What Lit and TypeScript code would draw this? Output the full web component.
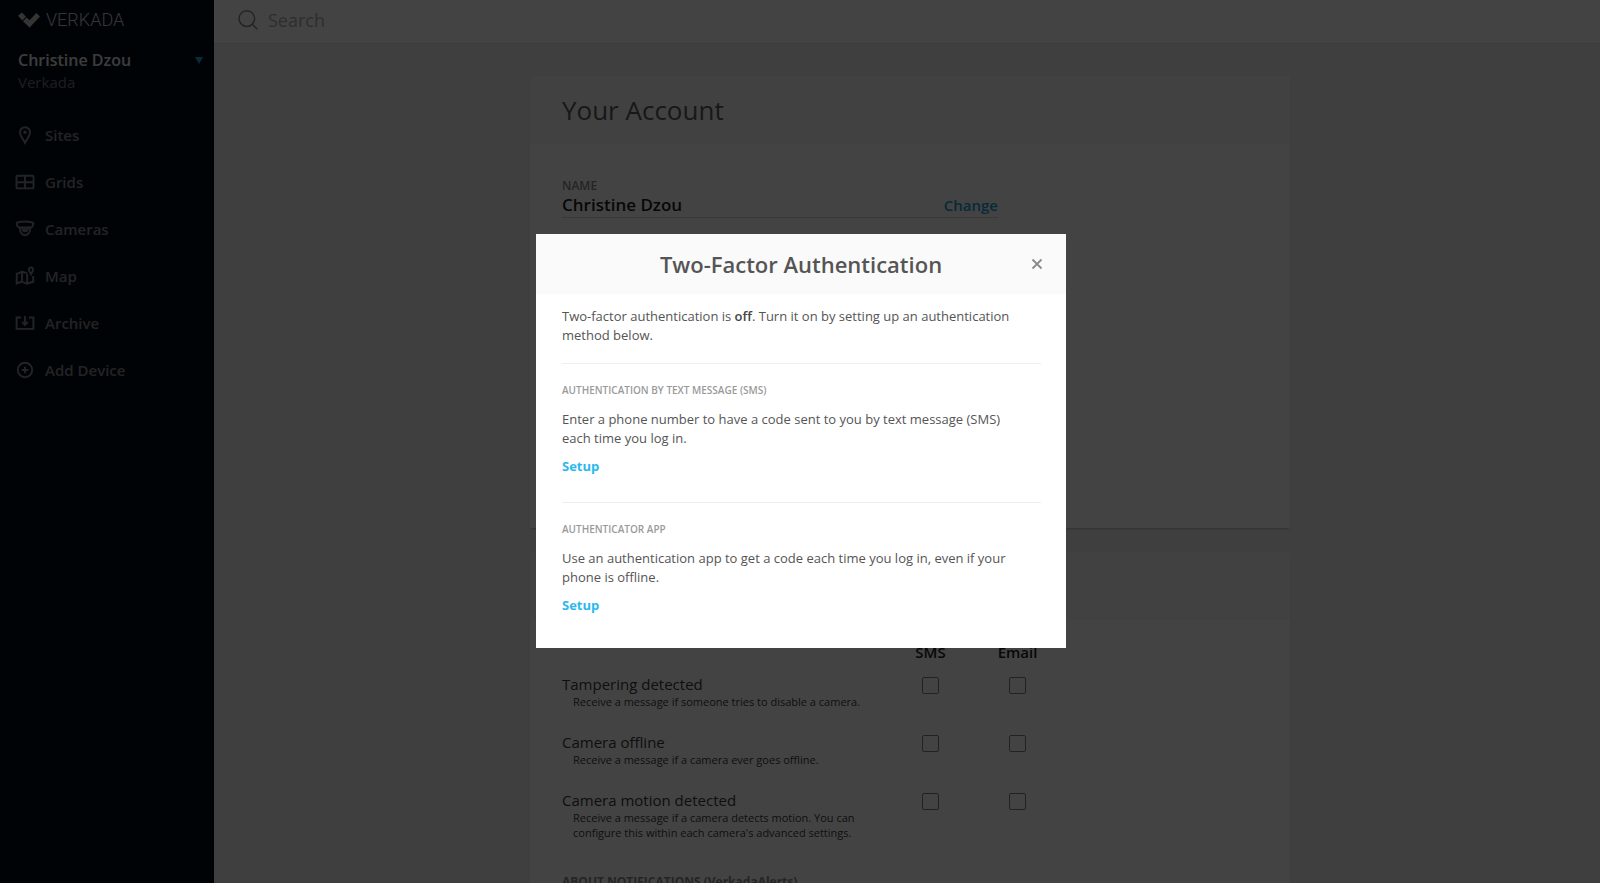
import { LitElement, html, css, svg } from "lit";
import { customElement } from "lit/decorators.js";

const icons: Record<string, unknown> = {
  sites: svg`<path d="M10 2.200a5 5 0 0 0-5 5.200c0 3.200 3 6.200 5 10.400 2-4.200 5-7.200 5-10.400a5 5 0 0 0-5-5.200z"/><circle cx="10" cy="7.300" r=".8" fill="currentColor"/>`,
  grids: svg`<rect x="1.500" y="3.800" width="17" height="12.600" rx="1"/><path d="M10 4v12.400M1.500 10.200h17"/>`,
  cameras: svg`<path d="M2.500 3.500c4-1 11-1 15 0 1 .3 1 1 .7 2-.4 1.500-1 2.500-2 3H3.800c-1-.5-1.600-1.500-2-3-.3-1-.3-1.700.7-2z"/><path d="M4.800 8.800c.2 5 2.200 7.400 5.200 7.400s5-2.400 5.200-7.400"/><path d="M7.300 8.800c0 4.600 5.400 4.600 5.400 0"/><circle cx="10" cy="10.500" r=".5"/>`,
  map: svg`<path d="M12.200 7.200 7 5.800 1.700 7.800v9.700l4.800-1.800 5.700 2 6-2V10M7 5.800v9.700M12.200 8v9.500"/><path d="M16 1.500a2.200 2.200 0 0 0-2.200 2.300c0 1.400 1.400 2.600 2.200 4.400.8-1.800 2.200-3 2.200-4.400A2.200 2.200 0 0 0 16 1.500z"/>`,
  archive: svg`<path d="M6 4.500H1.600v11.400h16.800V4.500H14M10 3v8.500M7.200 9l2.800 2.800L12.800 9"/>`,
  add: svg`<circle cx="10" cy="10" r="7.200"/><path d="M10 6.800v6.400M6.800 10h6.400"/>`,
};

const nav = [
  ["sites", "Sites"],
  ["grids", "Grids"],
  ["cameras", "Cameras"],
  ["map", "Map"],
  ["archive", "Archive"],
  ["add", "Add Device"],
];

const alerts = [
  ["tamper", "Tampering detected", "Receive a message if someone tries to disable a camera."],
  ["offline", "Camera offline", "Receive a message if a camera ever goes offline."],
  ["motion", "Camera motion detected", "Receive a message if a camera detects motion. You can configure this within each camera's advanced settings."],
];

@customElement("side-nav")
class SideNav extends LitElement {
  static styles = css`
    :host { display: block; background: #000f18; color: #85878a; padding: 11px 11px 0 18px; box-sizing: border-box; }
    .brand { display: flex; align-items: center; gap: 6px; height: 18px; color: #c8c8c8; font: 300 18px/18px Roboto, sans-serif; }
    .brand svg { width: 22px; height: 16px; fill: currentColor; }
    .user { display: flex; align-items: center; justify-content: space-between; width: 100%; margin-top: 20px; padding: 0; border: 0; background: none; color: #e4e4e4; font: 600 16px/22px "Open Sans", sans-serif; }
    .caret { width: 0; border: 4px solid transparent; border-top: 7px solid #1ca4e6; border-bottom: 0; }
    .org { font-size: 15px; line-height: 22px; color: #6f7174; }
    ul { list-style: none; margin: 18px 0 0; padding: 0; }
    a { display: flex; align-items: center; gap: 10px; height: 47px; margin-left: -3px; color: inherit; text-decoration: none; font-weight: 600; font-size: 15px; }
    a svg { width: 20px; height: 20px; fill: none; stroke: currentColor; stroke-width: 1.900; }
  `;
  render() {
    return html`
      <div class="brand">
        <svg viewBox="0 0 22 16" aria-hidden="true"><path d="M0 3.800 3.800.600 8 4.800 4.300 8.600zM5 9.300 8.700 5.600 11.500 8.300 18.300.900 22 4.500 11.600 15.600z"/></svg>
        <span>VERKADA</span>
      </div>
      <button class="user">Christine Dzou<span class="caret"></span></button>
      <div class="org">Verkada</div>
      <nav><ul>${nav.map(([id, label]) => html`<li><a href="#${id}"><svg viewBox="0 0 20 20" aria-hidden="true">${icons[id]}</svg>${label}</a></li>`)}</ul></nav>
    `;
  }
}

@customElement("account-page")
class AccountPage extends LitElement {
  static styles = css`
    :host { display: block; background: #f0f0f0; min-width: 0; }
    .top { display: flex; align-items: center; gap: 10px; height: 44px; padding: 0 24px 4px; background: #fff; border-bottom: 1px solid #e0e0e0; box-sizing: border-box; }
    .top svg { width: 20px; height: 20px; fill: none; stroke: #8a8a8a; stroke-width: 1.500; }
    .top input { flex: 1; border: 0; outline: 0; padding: 0; background: none; font: 18px/26px "Open Sans", sans-serif; }
    .top input::placeholder { color: #b0b0b0; opacity: 1; }
    .cards { display: grid; gap: 24px; width: 760px; max-width: 100%; margin: 0 auto; padding: 32px 0 0 6px; }
    .card { background: #fff; box-shadow: 0 2px 2px -1px #bbb; }
    .card h2 { margin: 0; padding: 16px 32px; background: #f8f8f8; color: #5c5c5c; font-weight: 400; font-size: 26px; line-height: 36px; }
    .fields { padding: 34px 32px 0; min-height: 350px; }
    .name { display: grid; grid-template-columns: 1fr auto; width: 436px; border-bottom: 1px solid #d4d4d4; padding-bottom: 1px; }
    .name label { grid-column: 1 / -1; color: #8b8b8b; font-size: 12px; font-weight: 600; line-height: 16px; }
    .name output { color: #1c1c1c; font-size: 17px; font-weight: 600; line-height: 22px; }
    .name a { color: #19a0dc; font-size: 15px; font-weight: 600; line-height: 22px; text-decoration: none; }
    .alerts { padding: 20px 32px; }
    table { border-collapse: collapse; table-layout: fixed; width: 499px; }
    th, td { padding: 0; vertical-align: top; text-align: left; font-weight: 400; }
    th.col { width: 87px; text-align: center; font-weight: 600; font-size: 15px; line-height: 24px; color: #1c1c1c; height: 34px; }
    td { text-align: center; }
    .row { height: 58px; }
    .label { font-size: 15px; line-height: 20px; color: #3a3a3a; }
    .hint { max-width: 300px; padding-left: 11px; font-size: 11px; line-height: 15px; color: #404040; }
    input[type="checkbox"] { appearance: none; box-sizing: border-box; width: 17px; height: 17px; margin: 3px 0 0; border: 1px solid #808080; border-radius: 2px; }
    h3 { margin: 26px 0 0; color: #8b8b8b; font-size: 12px; line-height: 16px; font-weight: 700; }
  `;
  render() {
    return html`
      <header class="top">
        <svg viewBox="0 0 20 20" aria-hidden="true"><circle cx="8.800" cy="8.600" r="7.800"/><path d="m14.300 14.200 5 5"/></svg>
        <input type="search" placeholder="Search" aria-label="Search">
      </header>
      <main class="cards">
        <section class="card">
          <h2>Your Account</h2>
          <div class="fields">
            <div class="name"><label for="name">NAME</label><output id="name">Christine Dzou</output><a href="#change">Change</a></div>
          </div>
        </section>
        <section class="card">
          <h2>Notifications</h2>
          <div class="alerts">
            <table>
              <thead><tr><th></th><th class="col" scope="col">SMS</th><th class="col" scope="col">Email</th></tr></thead>
              <tbody>${alerts.map(([id, label, hint]) => html`
                <tr class="row"><th scope="row"><div class="label">${label}</div><div class="hint">${hint}</div></th>
                <td><input type="checkbox" id="${id}-sms" aria-label="${label} by SMS"></td>
                <td><input type="checkbox" id="${id}-email" aria-label="${label} by email"></td></tr>`)}</tbody>
            </table>
            <h3>ABOUT NOTIFICATIONS (VerkadaAlerts)</h3>
          </div>
        </section>
      </main>
    `;
  }
}

@customElement("auth-dialog")
class AuthDialog extends LitElement {
  static styles = css`
    :host { display: block; width: 530px; background: #fff; color: #555; font-size: 13px; line-height: 19px; }
    header { display: grid; grid-template-columns: 1fr auto 1fr; align-items: center; height: 60px; padding: 0 22px; background: #fafafa; }
    h1 { grid-column: 2; margin: 0; font-size: 22px; line-height: 30px; font-weight: 600; }
    button { justify-self: end; padding: 0; border: 0; background: none; color: #8a8a8a; width: 14px; height: 14px; }
    button svg { display: block; width: 14px; height: 14px; fill: none; stroke: currentColor; stroke-width: 1.800; }
    .body { padding: 13px 25px 33px 26px; }
    p { margin: 0; max-width: 456px; }
    b { font-weight: 600; color: #444; }
    section { margin-top: 18px; padding-top: 18px; border-top: 1px solid #eee; }
    section + section { margin-top: 26px; }
    h2 { margin: 0 0 12px; color: #9a9a9a; font-size: 10px; line-height: 16px; font-weight: 600; }
    a { display: block; width: max-content; margin-top: 9px; color: #29b8f0; font-weight: 700; text-decoration: none; }
  `;
  render() {
    return html`
      <header>
        <h1>Two-Factor Authentication</h1>
        <button aria-label="Close"><svg viewBox="0 0 14 14"><path d="m2.500 2.500 9 9m0-9-9 9"/></svg></button>
      </header>
      <div class="body">
        <p>Two-factor authentication is <b>off</b>. Turn it on by setting up an authentication method below.</p>
        <section>
          <h2>AUTHENTICATION BY TEXT MESSAGE (SMS)</h2>
          <p>Enter a phone number to have a code sent to you by text message (SMS) each time you log in.</p>
          <a href="#sms">Setup</a>
        </section>
        <section>
          <h2>AUTHENTICATOR APP</h2>
          <p>Use an authentication app to get a code each time you log in, even if your phone is offline.</p>
          <a href="#app">Setup</a>
        </section>
      </div>
    `;
  }
}

@customElement("app-root")
class AppRoot extends LitElement {
  static styles = css`
    :host { display: block; position: relative; height: 100vh; overflow: hidden; font-family: "Open Sans", sans-serif; }
    .shell { display: grid; grid-template-columns: 214px 1fr; height: 100%; }
    .overlay { position: absolute; inset: 0; display: grid; place-items: center; padding: 0 0 2px 2px; background: rgba(0, 0, 0, 0.737); }
  `;
  render() {
    return html`
      <div class="shell"><side-nav></side-nav><account-page></account-page></div>
      <div class="overlay"><auth-dialog role="dialog" aria-modal="true" aria-label="Two-Factor Authentication"></auth-dialog></div>
    `;
  }
}
